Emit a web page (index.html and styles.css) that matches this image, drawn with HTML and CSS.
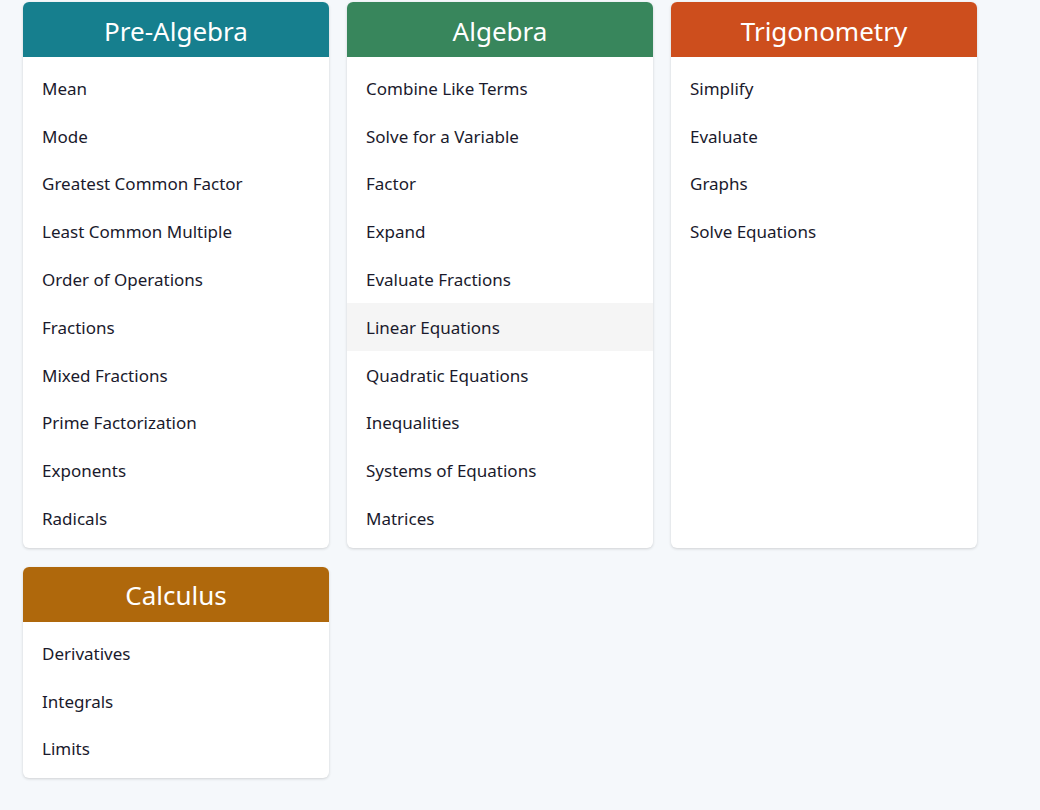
FILE: index.html
```html
<!DOCTYPE html>
<html lang="en">
<head>
<meta charset="utf-8">
<title>Math Topics</title>
<link rel="stylesheet" href="styles.css">
</head>
<body>
<main class="grid">
  <section class="card">
    <h2 class="card-head teal">Pre-Algebra</h2>
    <ul class="list">
      <li class="item">Mean</li>
      <li class="item">Mode</li>
      <li class="item">Greatest Common Factor</li>
      <li class="item">Least Common Multiple</li>
      <li class="item">Order of Operations</li>
      <li class="item">Fractions</li>
      <li class="item">Mixed Fractions</li>
      <li class="item">Prime Factorization</li>
      <li class="item">Exponents</li>
      <li class="item">Radicals</li>
    </ul>
  </section>
  <section class="card">
    <h2 class="card-head green">Algebra</h2>
    <ul class="list">
      <li class="item">Combine Like Terms</li>
      <li class="item">Solve for a Variable</li>
      <li class="item">Factor</li>
      <li class="item">Expand</li>
      <li class="item">Evaluate Fractions</li>
      <li class="item hover">Linear Equations</li>
      <li class="item">Quadratic Equations</li>
      <li class="item">Inequalities</li>
      <li class="item">Systems of Equations</li>
      <li class="item">Matrices</li>
    </ul>
  </section>
  <section class="card">
    <h2 class="card-head red">Trigonometry</h2>
    <ul class="list">
      <li class="item">Simplify</li>
      <li class="item">Evaluate</li>
      <li class="item">Graphs</li>
      <li class="item">Solve Equations</li>
    </ul>
  </section>
  <section class="card">
    <h2 class="card-head brown">Calculus</h2>
    <ul class="list">
      <li class="item">Derivatives</li>
      <li class="item">Integrals</li>
      <li class="item">Limits</li>
    </ul>
  </section>
</main>
</body>
</html>
```

FILE: styles.css
```css
html, body {
  margin: 0;
  padding: 0;
  background: #f5f8fb;
}
body {
  font-family: "Noto Sans", "Open Sans", sans-serif;
  color: #1a1a2c;
}
.grid {
  display: grid;
  grid-template-columns: repeat(3, 306px);
  column-gap: 18px;
  row-gap: 19px;
  padding: 2px 23px 20px;
  align-items: stretch;
}
.card {
  background: #fff;
  border-radius: 6px;
  box-shadow: 0 1px 3px rgba(0, 0, 0, 0.16);
  overflow: hidden;
}
.card-head {
  margin: 0;
  height: 55px;
  box-sizing: border-box;
  padding-top: 2px;
  display: flex;
  align-items: center;
  justify-content: center;
  color: #fff;
  font-weight: 400;
  font-size: 26px;
}
.teal { background: #167f8e; }
.green { background: #38865c; }
.red { background: #cd4e1d; }
.brown { background: #af680c; }
.list {
  list-style: none;
  margin: 0;
  padding: 7px 0 6px;
}
.item {
  height: 47.8px;
  display: flex;
  align-items: center;
  padding-left: 19px;
  padding-top: 1px;
  box-sizing: border-box;
  font-size: 17px;
}
.item.hover {
  background: #f5f5f5;
}
```
